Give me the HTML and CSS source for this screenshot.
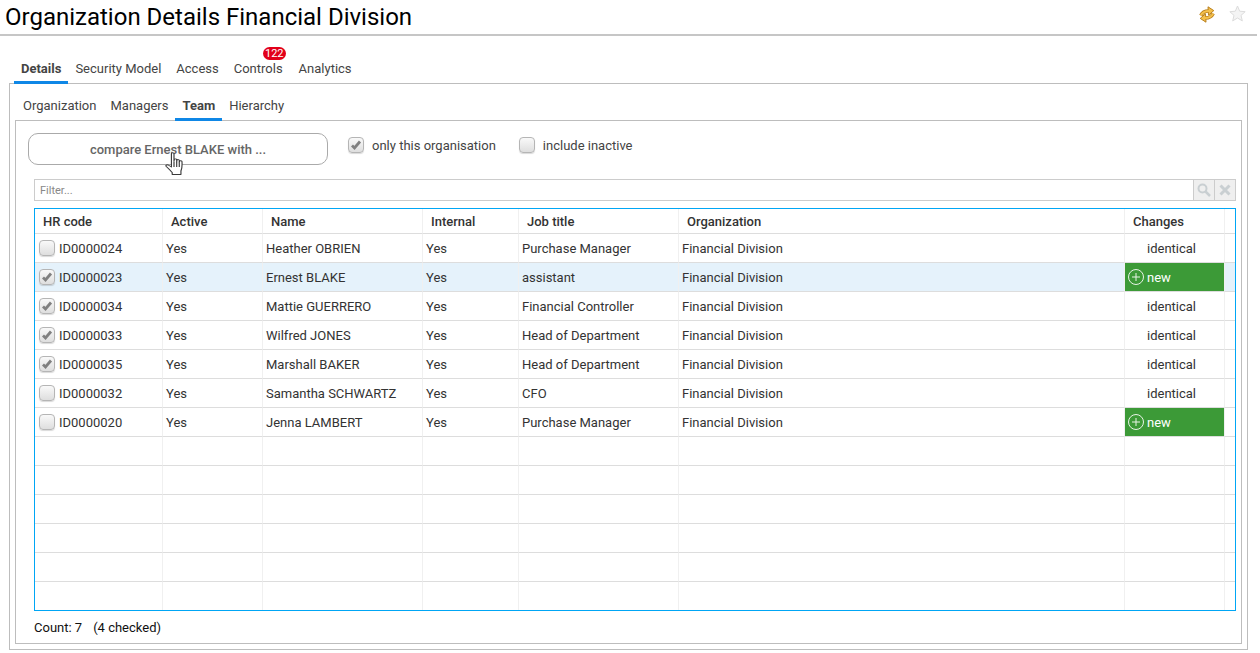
FILE: index.html
```html
<!DOCTYPE html>
<html lang="en">
<head>
    <meta charset="UTF-8">
    <title>Organization Details Financial Division</title>
    <link rel="stylesheet" href="styles.css">
</head>
<body>
    <header class="title-bar">
        <h1>Organization Details Financial Division</h1>
        <div class="title-icons">
            <svg class="icon-sync" width="16" height="17" viewBox="0 0 16 17">
                <path class="sync-edge" d="M1.800 9.500C3 7 5.500 5 9.500 5"/>
                <path class="sync-edge" d="M14.200 7.500C13 10 10.500 12 6.500 12"/>
                <path d="M9 .8L14.800 4.600L9.500 9.200Z" fill="#f5c04a" stroke="#b9801f" stroke-linejoin="round"/>
                <path d="M7 16.200L1.200 12.400L6.500 7.800Z" fill="#f5c04a" stroke="#b9801f" stroke-linejoin="round"/>
                <path class="sync-fill" d="M1.800 9.500C3 7 5.500 5 10 5"/>
                <path class="sync-fill" d="M14.200 7.500C13 10 10.500 12 6 12"/>
            </svg>
            <svg class="icon-star" width="17" height="17" viewBox="0 0 17 17">
                <path d="M8.500 1L10.700 6.200L16.200 6.700L12 10.400L13.300 15.900L8.500 13L3.700 15.900L5 10.400L.8 6.700L6.300 6.200Z" fill="#f4f4f4" stroke="#dcdcdc"/>
            </svg>
        </div>
    </header>

    <nav class="tabs main-tabs">
        <a class="tab active">Details</a>
        <a class="tab">Security Model</a>
        <a class="tab">Access</a>
        <a class="tab">Controls<span class="badge">122</span></a>
        <a class="tab">Analytics</a>
    </nav>

    <section class="outer-panel">
        <nav class="tabs sub-tabs">
            <a class="tab">Organization</a>
            <a class="tab">Managers</a>
            <a class="tab active">Team</a>
            <a class="tab">Hierarchy</a>
        </nav>

        <div class="inner-panel">
            <div class="toolbar">
                <button class="compare-btn" type="button">
                    compare Ernest BLAKE with ...
                    <svg class="hand-cursor" width="18" height="24" viewBox="0 0 14 24" preserveAspectRatio="none">
                        <path d="M5 1.500C5 .6 7 .6 7 1.500V9.500L7.200 7.500C7.400 6.600 9 6.700 9.100 7.600V10L9.300 8.200C9.500 7.300 11 7.400 11.100 8.300V10.500L11.400 9.200C11.600 8.400 13.200 8.600 13.200 9.500C13.400 13 13.400 16 12.400 19V22.500H5.600V20.500C4 18.500 2.800 16.500 1 14.500C.2 13.500 1.300 12.300 2.500 13L5 15Z" fill="#fff" stroke="#3a3a3a" stroke-width=".9" stroke-linejoin="round"/>
                        <path d="M7 10V15M9.100 10V15M11.100 10.500V15" fill="none" stroke="#3a3a3a" stroke-width=".9"/>
                    </svg>
                </button>
                <label class="check-label">
                    <span class="check checked"><svg viewBox="0 0 14 14"><path d="M3 7.500L5.500 10L11 3.500" /></svg></span>
                    only this organisation
                </label>
                <label class="check-label">
                    <span class="check"></span>
                    include inactive
                </label>
            </div>

            <div class="filter">
                <span class="filter-input">Filter...</span>
                <span class="filter-btn">
                    <svg width="14" height="14" viewBox="0 0 14 14"><circle cx="5.500" cy="5.500" r="4" fill="none" stroke="#c9cfd2" stroke-width="2"/><path d="M8.500 8.500L13 13" stroke="#c9cfd2" stroke-width="2.500"/></svg>
                </span>
                <span class="filter-btn">
                    <svg width="12" height="12" viewBox="0 0 12 12"><path d="M1.500 1.500L10.500 10.500M10.500 1.500L1.500 10.500" stroke="#c9cfd2" stroke-width="3"/></svg>
                </span>
            </div>

            <div class="grid-wrap">
                <table class="grid">
                    <colgroup>
                        <col class="c-code"><col class="c-active"><col class="c-name"><col class="c-internal">
                        <col class="c-job"><col class="c-org"><col class="c-changes"><col class="c-end">
                    </colgroup>
                    <thead>
                        <tr><th>HR code</th><th>Active</th><th>Name</th><th>Internal</th><th>Job title</th><th>Organization</th><th>Changes</th><th></th></tr>
                    </thead>
                    <tbody>
                        <tr>
                            <td><span class="code"><span class="check"></span>ID0000024</span></td>
                            <td>Yes</td><td>Heather OBRIEN</td><td>Yes</td><td>Purchase Manager</td><td>Financial Division</td>
                            <td class="same">identical</td><td></td>
                        </tr>
                        <tr class="selected">
                            <td><span class="code"><span class="check checked"><svg viewBox="0 0 14 14"><path d="M3 7.500L5.500 10L11 3.500" /></svg></span>ID0000023</span></td>
                            <td>Yes</td><td>Ernest BLAKE</td><td>Yes</td><td>assistant</td><td>Financial Division</td>
                            <td class="new"><span class="new-inner"><svg width="16" height="16" viewBox="0 0 16 16"><circle cx="8" cy="8" r="7.500" fill="none" stroke="#e8f3e6"/><path d="M8 4V12M4 8H12" stroke="#e8f3e6"/></svg>new</span></td><td></td>
                        </tr>
                        <tr>
                            <td><span class="code"><span class="check checked"><svg viewBox="0 0 14 14"><path d="M3 7.500L5.500 10L11 3.500" /></svg></span>ID0000034</span></td>
                            <td>Yes</td><td>Mattie GUERRERO</td><td>Yes</td><td>Financial Controller</td><td>Financial Division</td>
                            <td class="same">identical</td><td></td>
                        </tr>
                        <tr>
                            <td><span class="code"><span class="check checked"><svg viewBox="0 0 14 14"><path d="M3 7.500L5.500 10L11 3.500" /></svg></span>ID0000033</span></td>
                            <td>Yes</td><td>Wilfred JONES</td><td>Yes</td><td>Head of Department</td><td>Financial Division</td>
                            <td class="same">identical</td><td></td>
                        </tr>
                        <tr>
                            <td><span class="code"><span class="check checked"><svg viewBox="0 0 14 14"><path d="M3 7.500L5.500 10L11 3.500" /></svg></span>ID0000035</span></td>
                            <td>Yes</td><td>Marshall BAKER</td><td>Yes</td><td>Head of Department</td><td>Financial Division</td>
                            <td class="same">identical</td><td></td>
                        </tr>
                        <tr>
                            <td><span class="code"><span class="check"></span>ID0000032</span></td>
                            <td>Yes</td><td>Samantha SCHWARTZ</td><td>Yes</td><td>CFO</td><td>Financial Division</td>
                            <td class="same">identical</td><td></td>
                        </tr>
                        <tr>
                            <td><span class="code"><span class="check"></span>ID0000020</span></td>
                            <td>Yes</td><td>Jenna LAMBERT</td><td>Yes</td><td>Purchase Manager</td><td>Financial Division</td>
                            <td class="new"><span class="new-inner"><svg width="16" height="16" viewBox="0 0 16 16"><circle cx="8" cy="8" r="7.500" fill="none" stroke="#e8f3e6"/><path d="M8 4V12M4 8H12" stroke="#e8f3e6"/></svg>new</span></td><td></td>
                        </tr>
                        <tr><td></td><td></td><td></td><td></td><td></td><td></td><td></td><td></td></tr>
                        <tr><td></td><td></td><td></td><td></td><td></td><td></td><td></td><td></td></tr>
                        <tr><td></td><td></td><td></td><td></td><td></td><td></td><td></td><td></td></tr>
                        <tr><td></td><td></td><td></td><td></td><td></td><td></td><td></td><td></td></tr>
                        <tr><td></td><td></td><td></td><td></td><td></td><td></td><td></td><td></td></tr>
                        <tr><td></td><td></td><td></td><td></td><td></td><td></td><td></td><td></td></tr>
                    </tbody>
                </table>
            </div>

            <div class="count"><span>Count: 7</span><span>(4 checked)</span></div>
        </div>
    </section>
</body>
</html>
```

FILE: styles.css
```css
html, body { margin: 0; padding: 0; height: 653px; overflow: hidden; background: #fff; }
body { font-family: Roboto, sans-serif; font-size: 13px; color: #333; }

.title-bar { display: flex; justify-content: space-between; width: 1257px; height: 36px; box-sizing: border-box; border-bottom: 2px solid #c6c6c6; padding-left: 5px; }
h1 { margin: 0; font-size: 24px; font-weight: 400; line-height: 34px; color: #000; }
.title-icons { display: flex; gap: 14px; align-items: flex-start; padding: 5px 11px 0 0; }
.icon-sync { margin-top: 1px; }
.sync-edge { fill: none; stroke: #b9801f; stroke-width: 3.500; }
.sync-fill { fill: none; stroke: #f5c04a; stroke-width: 1.800; }

.tabs { display: flex; position: relative; }
.tab { position: relative; display: block; padding: 0 7px; height: 100%; color: #444; }
.tab.active { font-weight: 700; border-bottom: 3px solid #0f87e6; box-sizing: border-box; }
.main-tabs { height: 48px; box-sizing: border-box; padding: 24px 0 0 14px; margin-bottom: -1px; }
.main-tabs .tab { line-height: 17px; }
.main-tabs .tab + .tab { margin-left: 1px; }
.main-tabs .tab.active { margin-right: -1px; }
.main-tabs .tab:last-child { margin-left: 2px; }
.sub-tabs { height: 37px; box-sizing: border-box; padding: 12px 0 0 1px; margin-bottom: -1px; }
.sub-tabs .tab { line-height: 20px; }
.badge { position: absolute; left: 36px; top: -13px; width: 23px; height: 13px; border-radius: 7px; background: #e2001a; color: #fff; font-size: 11px; line-height: 13px; text-align: center; }

.outer-panel { width: 1239px; height: 567px; margin-left: 9px; box-sizing: border-box; border: 1px solid #bdbdbd; padding: 0 5px; }
.inner-panel { width: 1227px; height: 524px; box-sizing: border-box; border: 1px solid #bdbdbd; }

.toolbar { display: flex; align-items: flex-start; padding: 12px 0 0 12px; height: 58px; box-sizing: border-box; }
.compare-btn { position: relative; width: 300px; height: 32px; padding: 0; border: 1px solid #aaa; border-radius: 10px; background: #fff; font: 500 13px Roboto, sans-serif; color: #666; }
.hand-cursor { position: absolute; left: 136px; top: 18px; }
.check-label { display: flex; align-items: center; gap: 8px; height: 24px; margin: 0 0 0 20px; color: #444; }
.check-label + .check-label { margin-left: 23px; }
.check { display: inline-block; flex: none; width: 16px; height: 16px; box-sizing: border-box; border: 1px solid #b5b5b5; border-radius: 4px; background: linear-gradient(#f9f9f9, #dedede); box-shadow: 0 1px 1px rgba(0,0,0,0.15); }
.check svg { display: block; width: 14px; height: 14px; }
.check svg path { fill: none; stroke: #808080; stroke-width: 2.800; }

.filter { display: flex; width: 1202px; height: 22px; margin-left: 18px; box-sizing: border-box; border: 1px solid #ccc; }
.filter-input { flex: 1; padding-left: 5px; font-size: 11px; line-height: 21px; color: #888; }
.filter-btn { display: flex; align-items: center; justify-content: center; width: 21px; box-sizing: border-box; background: #efefef; border-left: 1px solid #ccc; }

.grid-wrap { width: 1202px; height: 403px; margin: 7px 0 0 18px; box-sizing: border-box; border: 1px solid #00a6f5; overflow: hidden; }
.grid { width: 1200px; table-layout: fixed; border-collapse: separate; border-spacing: 0; }
.c-code { width: 128px; } .c-active { width: 100px; } .c-name { width: 160px; } .c-internal { width: 96px; }
.c-job { width: 160px; } .c-org { width: 446px; } .c-changes { width: 100px; } .c-end { width: 10px; }
.grid th, .grid td { box-sizing: border-box; border-right: 1px solid #f0f0f0; border-bottom: 1px solid #ddd; white-space: nowrap; overflow: hidden; }
.grid th { height: 25px; padding: 0 0 0 8px; text-align: left; font-weight: 500; color: #333; }
.grid td { height: 29px; padding: 0 0 0 3px; color: #333; }
.grid th:last-child, .grid td:last-child { border-right: 0; }
.code { display: flex; align-items: center; gap: 4px; padding-left: 1px; }
.selected td { background: #e5f2fb; }
.grid td.same { padding-left: 22px; }
.grid td.new { padding: 0; background: #3c9a37; color: #fff; }
.new-inner { display: flex; align-items: center; gap: 3px; padding-left: 3px; }

.count { display: flex; gap: 11px; margin: 8px 0 0 18px; color: #111; line-height: 17px; }
```
